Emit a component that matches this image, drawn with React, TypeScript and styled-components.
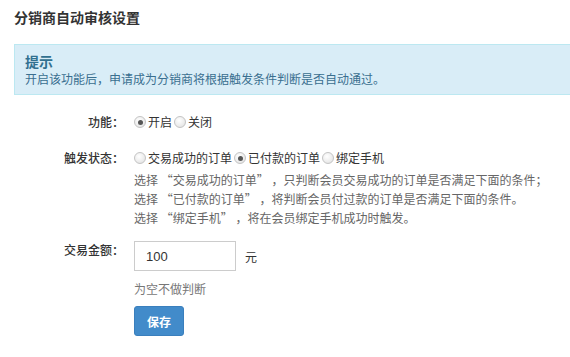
import React from 'react';
import styled, { createGlobalStyle } from 'styled-components';

const GlobalStyle = createGlobalStyle`
  html, body {
    margin: 0;
    padding: 0;
    background: #fff;
  }
  body {
    font-family: "Noto Sans CJK SC", "Liberation Sans", sans-serif;
    font-size: 12px;
    color: #333;
    overflow: hidden;
  }
`;

const Page = styled.div`
  padding-left: 14px;
`;

const Title = styled.h2`
  margin: 0;
  padding-top: 7px;
  font-size: 14px;
  line-height: 20px;
  font-weight: bold;
  color: #333;
`;

const Alert = styled.div`
  margin-top: 17px;
  padding: 7px 10px 6px;
  background: #d9edf7;
  border: 1px solid #bce8f1;
  border-right: none;
  color: #3a6f8f;
`;

const AlertTitle = styled.div`
  font-size: 14px;
  line-height: 18px;
  font-weight: bold;
  color: #31708f;
`;

const AlertText = styled.div`
  font-size: 12px;
  line-height: 18px;
`;

const Form = styled.div`
  margin-top: 18px;
  display: flex;
  flex-direction: column;
`;

const Row = styled.div<{ $gap?: number }>`
  display: grid;
  grid-template-columns: 110px 1fr;
  column-gap: 10px;
  margin-top: ${(p) => p.$gap ?? 0}px;
`;

const Label = styled.div`
  text-align: right;
  line-height: 18px;
  font-weight: 500;
  color: #333;
`;

const Controls = styled.div`
  display: flex;
  flex-direction: column;
`;

const Options = styled.div`
  display: flex;
  align-items: center;
  line-height: 18px;
`;

const Option = styled.label`
  display: flex;
  align-items: center;
  margin-right: 2px;
  color: #333;
`;

const Radio = styled.input.attrs({ type: 'radio' })`
  appearance: none;
  -webkit-appearance: none;
  width: 12px;
  height: 12px;
  margin: 0 2px 0 0;
  border-radius: 50%;
  border: 1px solid #c4c4c4;
  background: radial-gradient(circle at 40% 35%, #ffffff 0%, #ececec 60%, #dadada 100%);
  position: relative;
  &:checked::after {
    content: '';
    position: absolute;
    left: 2.5px;
    top: 2.5px;
    width: 5px;
    height: 5px;
    border-radius: 50%;
    background: #555;
  }
`;

const Help = styled.div`
  margin-top: 3px;
  line-height: 19px;
  color: #666;
`;

const InputLine = styled.div`
  display: flex;
  align-items: center;
`;

const AmountInput = styled.input`
  box-sizing: border-box;
  width: 102px;
  height: 30px;
  padding: 0 11px;
  border: 1px solid #ccc;
  font-family: "Liberation Sans", Arial, sans-serif;
  font-size: 13px;
  color: #333;
  outline: none;
`;

const Unit = styled.span`
  margin-left: 9px;
  font-size: 12px;
  color: #333;
`;

const Note = styled.div`
  margin-top: 9px;
  line-height: 18px;
  color: #777;
`;

const SaveButton = styled.button`
  box-sizing: border-box;
  width: 50px;
  height: 30px;
  margin-top: 8px;
  border: 1px solid #3a7fbd;
  border-radius: 3px;
  background: #428bca;
  color: #fff;
  font-family: "Noto Sans CJK SC", sans-serif;
  font-size: 12px;
  font-weight: bold;
  padding: 0;
`;

const App: React.FC = () => {
  return (
    <Page>
      <GlobalStyle />
      <Title>分销商自动审核设置</Title>
      <Alert>
        <AlertTitle>提示</AlertTitle>
        <AlertText>开启该功能后，申请成为分销商将根据触发条件判断是否自动通过。</AlertText>
      </Alert>
      <Form>
        <Row>
          <Label>功能：</Label>
          <Options>
            <Option>
              <Radio name="enable" defaultChecked />
              开启
            </Option>
            <Option>
              <Radio name="enable" />
              关闭
            </Option>
          </Options>
        </Row>
        <Row $gap={18}>
          <Label>触发状态：</Label>
          <Controls>
            <Options>
              <Option>
                <Radio name="trigger" />
                交易成功的订单
              </Option>
              <Option>
                <Radio name="trigger" defaultChecked />
                已付款的订单
              </Option>
              <Option>
                <Radio name="trigger" />
                绑定手机
              </Option>
            </Options>
            <Help>
              选择 “交易成功的订单” ，只判断会员交易成功的订单是否满足下面的条件；
              <br />
              选择 “已付款的订单” ，将判断会员付过款的订单是否满足下面的条件。
              <br />
              选择 “绑定手机” ，将在会员绑定手机成功时触发。
            </Help>
          </Controls>
        </Row>
        <Row $gap={14}>
          <Label>交易金额：</Label>
          <Controls>
            <InputLine>
              <AmountInput defaultValue="100" />
              <Unit>元</Unit>
            </InputLine>
            <Note>为空不做判断</Note>
            <div>
              <SaveButton>保存</SaveButton>
            </div>
          </Controls>
        </Row>
      </Form>
    </Page>
  );
};

export default App;
